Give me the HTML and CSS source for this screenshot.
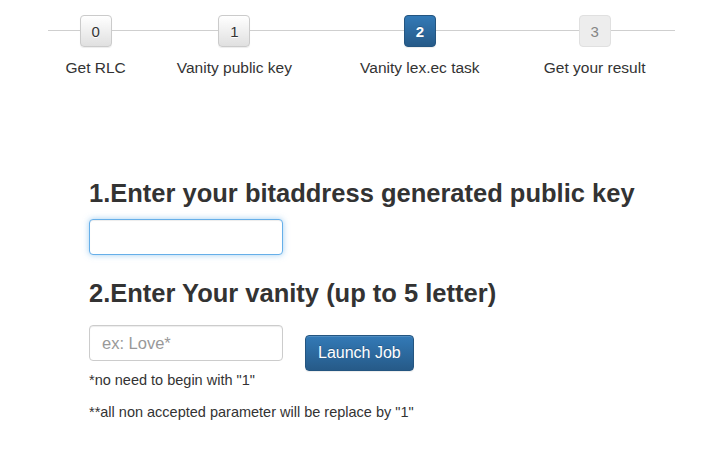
FILE: index.html
```html
<!DOCTYPE html>
<html>
<head>
<meta charset="utf-8">
<title>Vanity wizard</title>
<link rel="stylesheet" href="styles.css">
</head>
<body>
<div class="wizard">
  <table class="steps">
    <tr>
      <td><span class="step">0</span><div class="label">Get RLC</div></td>
      <td><span class="step">1</span><div class="label">Vanity public key</div></td>
      <td><span class="step active">2</span><div class="label">Vanity lex.ec task</div></td>
      <td><span class="step disabled">3</span><div class="label">Get your result</div></td>
    </tr>
  </table>
</div>
<div class="form">
  <h3 class="title first">1.Enter your bitaddress generated public key</h3>
  <input class="field focus" type="text">
  <h3 class="title second">2.Enter Your vanity (up to 5 letter)</h3>
  <div class="row">
    <input class="field" type="text" placeholder="ex: Love*">
    <button class="btn-launch" type="button">Launch Job</button>
  </div>
  <p class="note one">*no need to begin with "1"</p>
  <p class="note two">**all non accepted parameter will be replace by "1"</p>
</div>
</body>
</html>
```
FILE: styles.css
```css
html, body {
  margin: 0;
  padding: 0;
  background: #fff;
}
body {
  font-family: "Liberation Sans", Arial, sans-serif;
  font-size: 14px;
  color: #333;
}
.wizard {
  position: relative;
  margin: 15px 0 0 48px;
  width: 627px;
}
.wizard::before {
  content: "";
  position: absolute;
  left: 0;
  right: 0;
  top: 15px;
  height: 1px;
  background: #cfcfcf;
}
.steps {
  position: relative;
  width: 627px;
  border-collapse: collapse;
  border-spacing: 0;
}
.steps td {
  padding: 0;
  text-align: center;
  vertical-align: top;
  white-space: nowrap;
}
.step {
  display: inline-flex;
  align-items: center;
  justify-content: center;
  box-sizing: border-box;
  width: 32px;
  height: 32px;
  border: 1px solid #cbcbcb;
  border-radius: 4px;
  background: linear-gradient(to bottom, #ffffff 0%, #e0e0e0 100%);
  box-shadow: 0 1px 1px rgba(0,0,0,0.075);
  text-shadow: 0 1px 0 #fff;
  color: #333;
  font-size: 15px;
}
.step.active {
  background: linear-gradient(to bottom, #337ab7 0%, #265a88 100%);
  border-color: #245580;
  color: #fff;
  font-weight: bold;
  text-shadow: 0 -1px 0 rgba(0,0,0,0.2);
}
.step.disabled {
  background: #ededed;
  border-color: #e0e0e0;
  color: #858585;
  box-shadow: none;
  text-shadow: none;
}
.label {
  margin-top: 11px;
  font-size: 15.5px;
  line-height: 20px;
}
.form {
  margin-left: 89px;
}
.title {
  margin: 0;
  font-size: 25.5px;
  line-height: 26px;
  font-weight: bold;
  color: #333;
}
.title.first {
  margin-top: 102px;
  margin-bottom: 13px;
}
.title.second {
  margin-top: 25px;
  margin-bottom: 19px;
}
.field {
  display: block;
  box-sizing: border-box;
  width: 194px;
  height: 36px;
  margin: 0;
  padding: 6px 12px;
  border: 1px solid #cccccc;
  border-radius: 4px;
  box-shadow: inset 0 1px 1px rgba(0,0,0,0.075);
  font-family: "Liberation Sans", Arial, sans-serif;
  font-size: 16.5px;
  color: #555;
  outline: none;
}
.field::placeholder {
  color: #999;
}
.field.focus {
  border-color: #66afe9;
  box-shadow: inset 0 1px 1px rgba(0,0,0,0.075), 0 0 6px rgba(102,175,233,0.6);
}
.row {
  display: flex;
  align-items: flex-start;
}
.btn-launch {
  margin: 10px 0 0 22px;
  box-sizing: border-box;
  height: 36px;
  padding: 7px 12px;
  border: 1px solid #245580;
  border-radius: 4px;
  background: linear-gradient(to bottom, #337ab7 0%, #265a88 100%);
  color: #fff;
  font-family: "Liberation Sans", Arial, sans-serif;
  font-size: 16px;
  line-height: 20px;
  text-shadow: 0 -1px 0 rgba(0,0,0,0.2);
  box-shadow: inset 0 1px 0 rgba(255,255,255,0.15), 0 1px 1px rgba(0,0,0,0.075);
}
.note {
  margin: 0;
  font-size: 14.5px;
  line-height: 18px;
}
.note.two {
  margin-top: 14px;
}
```
